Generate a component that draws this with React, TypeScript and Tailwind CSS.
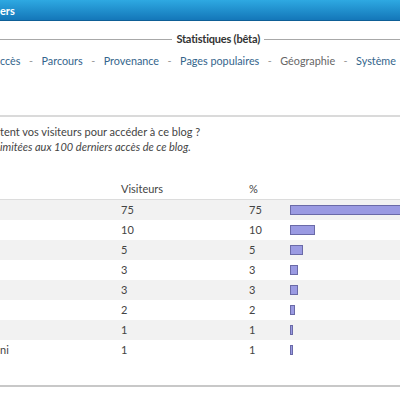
import React from "react";

const rows = [
  { label: "", visitors: 75, pct: 75 },
  { label: "", visitors: 10, pct: 10 },
  { label: "", visitors: 5, pct: 5 },
  { label: "", visitors: 3, pct: 3 },
  { label: "", visitors: 3, pct: 3 },
  { label: "", visitors: 2, pct: 2 },
  { label: "", visitors: 1, pct: 1 },
  { label: "ni", visitors: 1, pct: 1 },
];

const navItems = ["ccès", "Parcours", "Provenance", "Pages populaires", "Géographie", "Système"];

export default function App() {
  return (
    <div className="w-[400px] h-[400px] overflow-hidden bg-white text-[11px] text-[#444]" style={{ fontFamily: "Lato, 'Liberation Sans', sans-serif" }}>
      {/* barre du haut */}
      <div className="h-[21px] flex items-center bg-gradient-to-b from-[#2ea9e2] to-[#1477b9] border-b border-[#0e5f96]">
        <span className="text-white font-bold text-[11px] leading-none">ers</span>
      </div>

      <div className="flex items-center mt-[11px] h-[14px]">
        <div className="flex-1 h-px bg-[#a8a8a8]" />
        <span className="px-[4px] font-bold text-[11px] tracking-[-0.2px] text-[#333] whitespace-nowrap">Statistiques (bêta)</span>
        <div className="w-[136px] h-px bg-[#a8a8a8]" />
      </div>

      <div className="flex items-center gap-[8.5px] mt-[8px] h-[14px] whitespace-nowrap text-[10.8px]">
        {navItems.map((item, i) => (
          <React.Fragment key={item}>
            {i > 0 && <span className="text-[#999]">-</span>}
            <span className={item === "Géographie" ? "text-[#666]" : "text-[#34658c]"}>{item}</span>
          </React.Fragment>
        ))}
      </div>

      <div className="mt-[47px] h-[2px] bg-[#dadada]" />

      <div className="mt-[7px] leading-[15px] whitespace-nowrap">
        <p>tent vos visiteurs pour accéder à ce blog ?</p>
        <p className="italic">imitées aux 100 derniers accès de ce blog.</p>
      </div>

      <div className="mt-[26px]">
        <div className="grid grid-cols-[121px_128px_41px_1fr] h-[20px] items-center border-b border-[#dcdcdc]">
          <span />
          <span>Visiteurs</span>
          <span>%</span>
          <span />
        </div>
        {rows.map((r, i) => (
          <div
            key={i}
            className={`grid grid-cols-[121px_128px_41px_1fr] h-[20px] items-center ${i % 2 === 0 ? "bg-[#f2f2f2]" : "bg-white"}`}
          >
            <span>{r.label}</span>
            <span>{r.visitors}</span>
            <span>{r.pct}</span>
            <div className="flex">
              <div className="h-[10px] bg-[#9a9ae2] border border-[#6a6aa8]" style={{ width: r.pct * 2.5 }} />
            </div>
          </div>
        ))}
      </div>

      <div className="mt-[25px] h-[2px] bg-[#c8c8c8]" />
    </div>
  );
}
